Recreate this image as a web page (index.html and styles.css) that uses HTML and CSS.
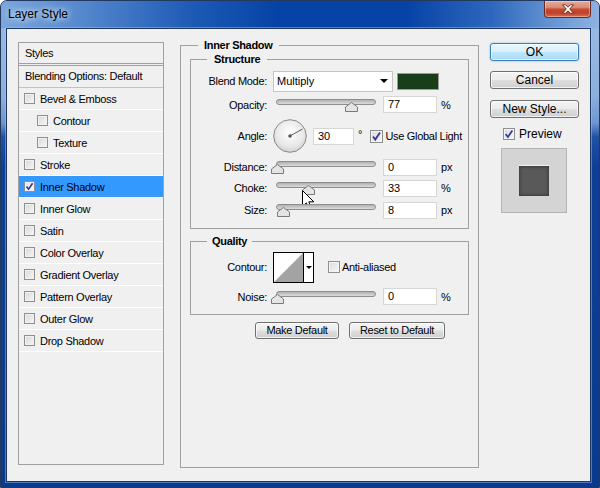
FILE: index.html
```html
<!DOCTYPE html>
<html>
<head>
<meta charset="utf-8">
<title>Layer Style</title>
<link rel="stylesheet" href="styles.css">
</head>
<body>
<div class="window">
  <div class="titlebar">
    <span class="title">Layer Style</span>
    <div class="close">
      <svg width="14" height="11" viewBox="0 0 14 11"><path d="M1.5 0.8h3.2l2.3 2.4 2.3-2.4h3.2l-3.8 4.2 3.8 4.2h-3.2l-2.3-2.4-2.3 2.4h-3.2l3.8-4.2z" fill="#fff" stroke="#5a2418" stroke-width="0.9"/></svg>
    </div>
  </div>
  <div class="client">
    <div class="styles-list">
      <div class="list-head">Styles</div>
      <div class="list-blend">Blending Options: Default</div>
      <div class="item"><span class="cb"></span>Bevel &amp; Emboss</div>
      <div class="item sub"><span class="cb"></span>Contour</div>
      <div class="item sub"><span class="cb"></span>Texture</div>
      <div class="item"><span class="cb"></span>Stroke</div>
      <div class="item selected"><span class="cb"><svg width="9" height="9" viewBox="0 0 9 9"><path d="M1.5 4.5 L3.6 7.2 L7.6 1.2" fill="none" stroke="#33399a" stroke-width="1.6"/></svg></span>Inner Shadow</div>
      <div class="item"><span class="cb"></span>Inner Glow</div>
      <div class="item"><span class="cb"></span>Satin</div>
      <div class="item"><span class="cb"></span>Color Overlay</div>
      <div class="item"><span class="cb"></span>Gradient Overlay</div>
      <div class="item"><span class="cb"></span>Pattern Overlay</div>
      <div class="item"><span class="cb"></span>Outer Glow</div>
      <div class="item"><span class="cb"></span>Drop Shadow</div>
    </div>

    <fieldset class="group outer">
      <legend>Inner Shadow</legend>
      <fieldset class="group structure">
        <legend>Structure</legend>
        <div class="row row-blend">
          <span class="lbl">Blend Mode:</span>
          <div class="dropdown"><span>Multiply</span><span class="dd-arrow"></span></div>
          <span class="swatch"></span>
        </div>
        <div class="row row-21">
          <span class="lbl">Opacity:</span>
          <div class="slider"><div class="track"></div>
            <svg class="thumb" style="left:72px" width="13" height="10" viewBox="0 0 13 10"><polygon points="6.5,0.5 12.5,5 12.5,9.5 0.5,9.5 0.5,5" fill="#e4e4e4" stroke="#7a7a7a"/></svg>
          </div>
          <span class="num">77</span><span class="unit">%</span>
        </div>
        <div class="row row-angle">
          <span class="lbl">Angle:</span>
          <svg class="dial" width="34" height="34" viewBox="0 0 34 34">
            <defs><radialGradient id="dg" cx="50%" cy="40%" r="60%"><stop offset="0" stop-color="#ffffff"/><stop offset="0.7" stop-color="#e8e8e8"/><stop offset="1" stop-color="#d2d2d2"/></radialGradient></defs>
            <circle cx="17" cy="17" r="16.3" fill="url(#dg)" stroke="#8a8a8a" stroke-width="1"/>
            <line x1="17" y1="17" x2="29.5" y2="10" stroke="#5a5a5a" stroke-width="1"/>
            <circle cx="17" cy="17" r="1.8" fill="#555"/>
          </svg>
          <span class="num num-short">30</span><span class="deg">°</span>
          <span class="cb13"><svg width="11" height="11" viewBox="0 0 11 11"><path d="M2 5.5 L4.3 8.6 L9 1.6" fill="none" stroke="#33399a" stroke-width="1.8"/></svg></span>
          <span class="cb-label">Use Global Light</span>
        </div>
        <div class="row row-20">
          <span class="lbl">Distance:</span>
          <div class="slider"><div class="track"></div>
            <svg class="thumb" style="left:-2px" width="13" height="10" viewBox="0 0 13 10"><polygon points="6.5,0.5 12.5,5 12.5,9.5 0.5,9.5 0.5,5" fill="#e4e4e4" stroke="#7a7a7a"/></svg>
          </div>
          <span class="num">0</span><span class="unit">px</span>
        </div>
        <div class="row row-22">
          <span class="lbl">Choke:</span>
          <div class="slider"><div class="track"></div>
            <svg class="thumb" style="left:29px" width="13" height="10" viewBox="0 0 13 10"><polygon points="6.5,0.5 12.5,5 12.5,9.5 0.5,9.5 0.5,5" fill="#e4e4e4" stroke="#7a7a7a"/></svg>
            <svg class="cursor" width="13" height="20" viewBox="0 0 13 20"><path d="M0.5 0.5 L0.5 16.5 L4.3 12.8 L7.2 19.2 L9.6 18.2 L6.8 11.8 L11.8 11.8 Z" fill="#fff" stroke="#000" stroke-width="1" stroke-linejoin="miter"/></svg>
          </div>
          <span class="num">33</span><span class="unit">%</span>
        </div>
        <div class="row row-22">
          <span class="lbl">Size:</span>
          <div class="slider"><div class="track"></div>
            <svg class="thumb" style="left:4px" width="13" height="10" viewBox="0 0 13 10"><polygon points="6.5,0.5 12.5,5 12.5,9.5 0.5,9.5 0.5,5" fill="#e4e4e4" stroke="#7a7a7a"/></svg>
          </div>
          <span class="num">8</span><span class="unit">px</span>
        </div>
      </fieldset>

      <fieldset class="group quality">
        <legend>Quality</legend>
        <div class="row row-contour">
          <span class="lbl">Contour:</span>
          <div class="contour">
            <svg width="29" height="29" viewBox="0 0 29 29"><rect width="29" height="29" fill="#fff"/><polygon points="0,29 29,0 29,29" fill="#a3a3a3"/></svg>
            <span class="contour-arrow"><span class="tri"></span></span>
          </div>
          <span class="cb12"></span>
          <span class="cb-label">Anti-aliased</span>
        </div>
        <div class="row row-21">
          <span class="lbl">Noise:</span>
          <div class="slider"><div class="track"></div>
            <svg class="thumb" style="left:-2px" width="13" height="10" viewBox="0 0 13 10"><polygon points="6.5,0.5 12.5,5 12.5,9.5 0.5,9.5 0.5,5" fill="#e4e4e4" stroke="#7a7a7a"/></svg>
          </div>
          <span class="num">0</span><span class="unit">%</span>
        </div>
      </fieldset>

      <div class="defaults">
        <button class="btn small w84">Make Default</button>
        <button class="btn small w96">Reset to Default</button>
      </div>
    </fieldset>

    <div class="side">
      <button class="btn big default">OK</button>
      <button class="btn big cancel">Cancel</button>
      <button class="btn big">New Style...</button>
      <div class="preview-check">
        <span class="cb12"><svg width="10" height="10" viewBox="0 0 10 10"><path d="M1.6 5 L3.9 8 L8.4 1.4" fill="none" stroke="#33399a" stroke-width="1.7"/></svg></span>
        <span>Preview</span>
      </div>
      <div class="preview-box"><div class="preview-swatch"></div></div>
    </div>
  </div>
</div>
</body>
</html>
```

FILE: styles.css
```css
* { box-sizing: border-box; }
html, body { margin: 0; padding: 0; }
body {
  width: 600px;
  height: 488px;
  overflow: hidden;
  background: #ffffff;
  font-family: "Liberation Sans", Arial, sans-serif;
  font-size: 11px;
  color: #000;
}

.window {
  width: 600px;
  height: 488px;
  border: 1px solid #22385c;
  border-radius: 7px 7px 0 0;
  overflow: hidden;
  display: flex;
  flex-direction: column;
  background: linear-gradient(to bottom, #6c96d2 0px, #98b8e2 30px, #8cafdd 95px, #6d95d1 122px, #1f52a6 136px, #0d3f96 165px, #0a3a8c 100%);
}

.titlebar {
  height: 27px;
  flex: none;
  display: flex;
  align-items: flex-start;
  background: linear-gradient(90deg, #7ba6dc 0%, #5387cd 14%, #1d5ab5 32%, #0643a6 46%, #0743a7 68%, #2d67bd 82%, #6b98d4 93%, #8fb3e1 100%);
}
.title {
  margin: 5px 0 0 7px;
  font-size: 12px;
  line-height: 16px;
  color: #000;
  text-shadow: 0 0 6px rgba(255,255,255,0.9), 0 0 10px rgba(255,255,255,0.6);
}
.close {
  margin-left: auto;
  margin-right: 8px;
  width: 47px;
  height: 17px;
  border: 1px solid #6a2a1f;
  border-top: none;
  border-radius: 0 0 4px 4px;
  background: linear-gradient(to bottom, #e7ab9c 0%, #d98a75 40%, #c54a30 52%, #c2402a 75%, #d9704f 100%);
  box-shadow: inset 0 0 0 1px rgba(255,255,255,0.35);
  display: flex;
  align-items: center;
  justify-content: center;
}

.client {
  margin: 0 8px 0 5px;
  height: 454px;
  border: 1px solid #1d3765;
  background: #f0f0f0;
  box-shadow: 0 0 0 1px rgba(170,200,240,0.45);
  display: flex;
  align-items: flex-start;
  padding: 10px 0 0 11px;
}

/* Styles list */
.styles-list {
  margin-top: 3px;
  width: 146px;
  height: 423px;
  flex: none;
  border: 1px solid #a0a0a0;
  background: #f0f0f0;
  letter-spacing: -0.3px;
}
.list-head {
  height: 23px;
  line-height: 20px;
  padding-left: 6px;
  border-bottom: 3px double #a0a0a0;
}
.list-blend {
  height: 22px;
  line-height: 21px;
  padding-left: 6px;
  border-bottom: 1px solid #c2c2c2;
}
.item {
  height: 22px;
  border-bottom: 1px solid #ffffff;
  display: flex;
  align-items: center;
  padding-left: 5px;
}
.item.sub { padding-left: 18px; }
.item.selected { background: #3399ff; }
.cb {
  width: 11px;
  height: 11px;
  margin-right: 5px;
  flex: none;
  border: 1px solid #8e8f8f;
  background: linear-gradient(135deg, #d8d8d8, #f6f6f6);
  box-shadow: inset 0 0 0 1px #f2f2f2;
  display: flex;
  align-items: center;
  justify-content: center;
}
.selected .cb { background: linear-gradient(135deg, #e2e2e2, #fafafa); }

/* group boxes */
.group {
  border: 1px solid #a0a0a0;
  margin: 0;
  min-width: 0;
}
.group legend {
  font-weight: bold;
  line-height: 13px;
  letter-spacing: -0.3px;
}
.outer {
  margin-left: 16px;
  width: 299px;
  height: 429px;
  flex: none;
  padding: 0 9px;
}
.outer > legend { margin-left: 8px; padding: 0 6px; }
.structure {
  margin-top: 1px;
  padding: 2px 0 7px 0;
}
.structure > legend { margin-left: 16px; padding: 0 7px; }
.quality {
  margin-top: 6px;
  padding: 0 0 7px 0;
}
.quality > legend { margin-left: 16px; padding: 0 5px; }

.row {
  display: flex;
  align-items: center;
}
.row-blend { height: 26px; }
.row-21 { height: 21px; }
.row-20 { height: 20px; }
.row-22 { height: 22px; }
.row-angle { height: 42px; }
.row-contour { height: 38px; }

.lbl {
  width: 76px;
  flex: none;
  text-align: right;
  margin-right: 6px;
  letter-spacing: -0.3px;
}

.dropdown {
  width: 120px;
  height: 21px;
  flex: none;
  background: #fff;
  border: 1px solid #c6c6c6;
  display: flex;
  align-items: center;
  padding-left: 3px;
}
.dd-arrow {
  margin-left: auto;
  margin-right: 4px;
  width: 0;
  height: 0;
  border-left: 4px solid transparent;
  border-right: 4px solid transparent;
  border-top: 4px solid #000;
}
.swatch {
  margin-left: 4px;
  width: 42px;
  height: 17px;
  flex: none;
  background: #183d19;
  border: 1px solid #9a9a9a;
}

.slider {
  position: relative;
  width: 105px;
  height: 12px;
  flex: none;
}
.track {
  margin-left: 3px;
  width: 100px;
  height: 6px;
  border: 1px solid #8e8e8e;
  border-radius: 3px;
  background: linear-gradient(to bottom, #b0b0b0, #dcdcdc);
}
.thumb {
  position: absolute;
  top: 3px;
  display: block;
}
.cursor {
  position: absolute;
  left: 29px;
  top: 8px;
  display: block;
}

.num {
  margin-left: 5px;
  width: 54px;
  height: 17px;
  flex: none;
  background: #fff;
  border: 1px solid #d6d6d6;
  padding-left: 4px;
  line-height: 15px;
}
.num-short { width: 41px; margin-left: 6px; }
.unit { margin-left: 4px; }
.deg { margin-left: 4px; align-self: center; margin-top: -4px; }

.dial { display: block; flex: none; }

.cb13, .cb12 {
  flex: none;
  border: 1px solid #8e8f8f;
  background: linear-gradient(135deg, #dadada, #f8f8f8);
  box-shadow: inset 0 0 0 1px #f4f4f4;
  display: flex;
  align-items: center;
  justify-content: center;
}
.cb13 { width: 13px; height: 13px; margin-left: 8px; }
.cb12 { width: 12px; height: 12px; margin-left: 14px; }
.cb-label { margin-left: 2px; letter-spacing: -0.3px; }

.contour {
  width: 41px;
  height: 31px;
  flex: none;
  border: 1px solid #000;
  display: flex;
  background: #fff;
}
.contour svg { display: block; }
.contour-arrow {
  flex: 1;
  border-left: 1px solid #000;
  display: flex;
  align-items: center;
  justify-content: center;
}
.tri {
  width: 0;
  height: 0;
  border-left: 3px solid transparent;
  border-right: 3px solid transparent;
  border-top: 3px solid #000;
}

.defaults {
  margin-top: 7px;
  padding-left: 65px;
  display: flex;
  gap: 10px;
}

.btn {
  font-family: "Liberation Sans", Arial, sans-serif;
  color: #000;
  border: 1px solid #707070;
  border-radius: 3px;
  background: linear-gradient(to bottom, #f4f4f4 0%, #ececec 48%, #dedede 52%, #cfcfcf 100%);
  box-shadow: inset 0 0 0 1px rgba(255,255,255,0.7);
  padding: 0;
  margin: 0;
  height: 17px;
  display: block;
}
.btn.small { font-size: 11px; line-height: 15px; letter-spacing: -0.3px; }
.w84 { width: 84px; }
.w96 { width: 96px; }

.side {
  margin-left: 11px;
  margin-top: 4px;
  width: 89px;
  flex: none;
}
.btn.big {
  width: 89px;
  height: 18px;
  font-size: 12px;
  line-height: 16px;
  margin-bottom: 10px;
}
.btn.default {
  border-color: #3c7fb1;
  background: linear-gradient(to bottom, #eaf6fd 0%, #d9f0fc 48%, #bee6fd 52%, #a7d9f5 100%);
  box-shadow: inset 0 0 0 1px rgba(255,255,255,0.6), 0 0 2px #67b7e8;
}
.btn.cancel { margin-bottom: 11px; }

.preview-check {
  margin: 1px 0 0 13px;
  height: 12px;
  display: flex;
  align-items: center;
  font-size: 12px;
}
.preview-check .cb12 { margin-left: 0; margin-right: 4px; }

.preview-box {
  margin: 8px 0 0 11px;
  width: 66px;
  height: 65px;
  border: 1px solid #b4b4b4;
  background: #d4d4d4;
  display: flex;
  align-items: center;
  justify-content: center;
}
.preview-swatch {
  width: 30px;
  height: 31px;
  background: #595959;
  border-top: 1px solid #f2f2f2;
  box-shadow: inset 0 0 3px 1px #3a3a3a;
}
```
